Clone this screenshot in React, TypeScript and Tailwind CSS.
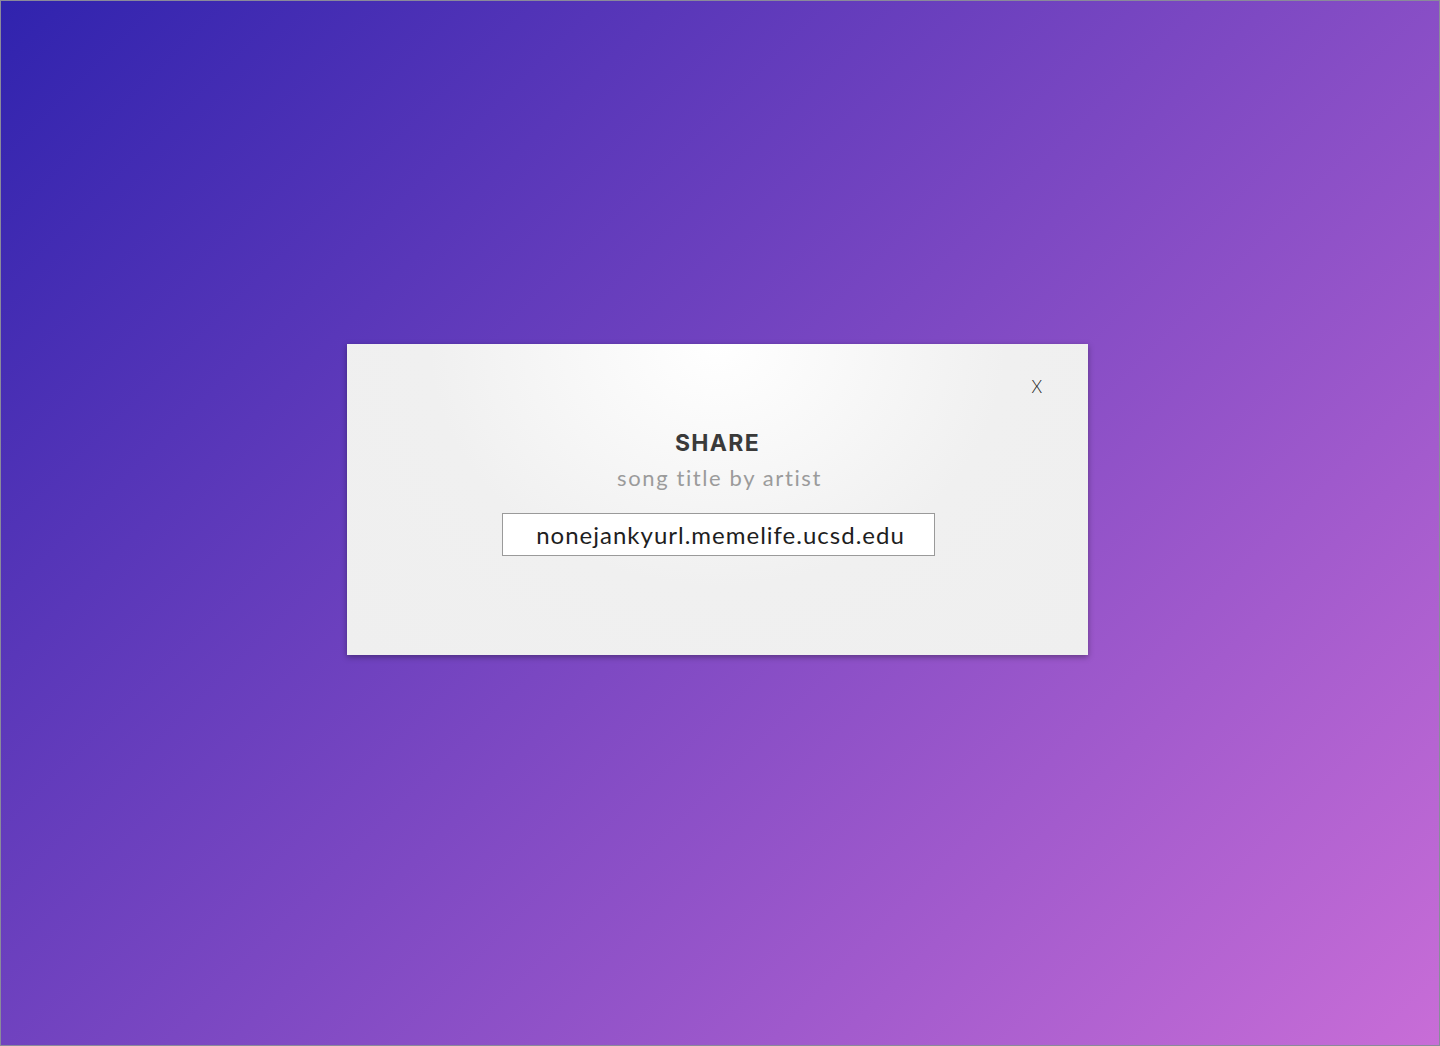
import React from "react";

const App = () => {
  return (
    <div className="h-[1046px] w-[1440px] border border-[#8a8a9a] bg-[linear-gradient(135deg,#3023ae_0%,#c86dd7_100%)] overflow-hidden">
      <div className="ml-[346px] mt-[343px] relative w-[741px] h-[311px] bg-[radial-gradient(ellipse_at_50%_0%,#ffffff_0%,#f0f0f0_55%,#efefef_100%)] shadow-[0_2px_6px_rgba(0,0,0,0.35)] flex flex-col items-center">
        <button className="absolute right-[46px] top-[34px] text-[17px] leading-none text-[#222] font-['Lato',sans-serif] font-light">
          X
        </button>
        <h2 className="mt-[85px] text-[23px] leading-[28px] font-bold tracking-[1.3px] text-[#3a3a3a] font-['Inter',sans-serif]">
          SHARE
        </h2>
        <p className="mt-[7px] pl-[4px] text-[22px] leading-[28px] text-[#9b9b9b] tracking-[1.6px] font-['Lato',sans-serif]">
          song title by artist
        </p>
        <div className="mt-[21px] ml-[2px] w-[433px] h-[43px] border border-[#9a9a9a] bg-white flex items-center justify-center">
          <span className="pl-[4px] text-[24px] leading-none text-[#1e1e1e] tracking-[1px] font-['Lato',sans-serif]">
            nonejankyurl.memelife.ucsd.edu
          </span>
        </div>
      </div>
    </div>
  );
};

export default App;
